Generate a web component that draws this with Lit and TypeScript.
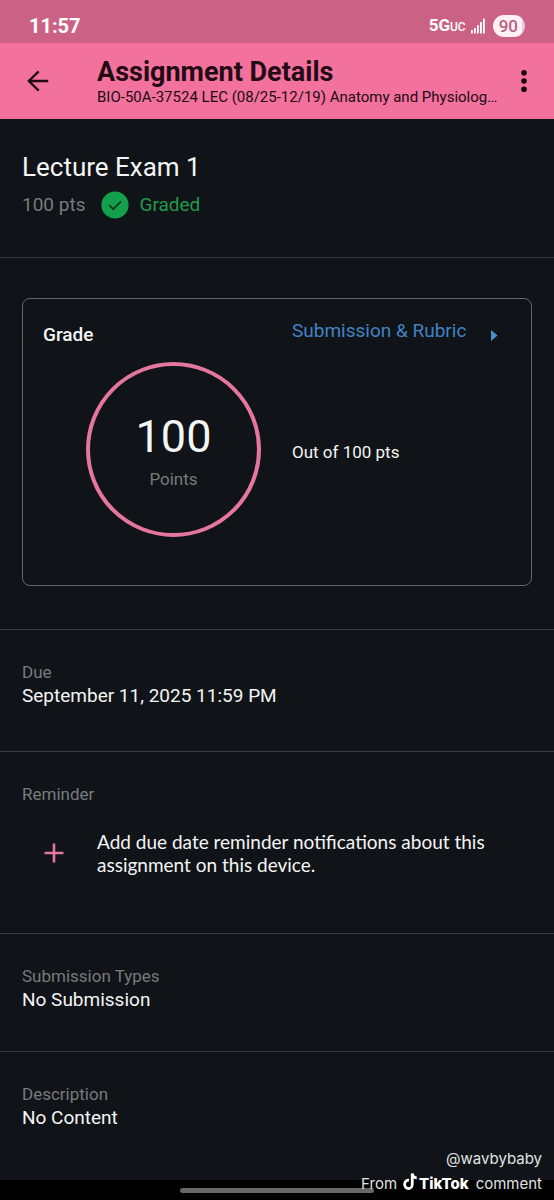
import { LitElement, html, css } from "lit";
import { customElement, property } from "lit/decorators.js";

@customElement("status-bar")
class StatusBar extends LitElement {
  static styles = css`
    :host {
      display: flex;
      align-items: center;
      justify-content: space-between;
      height: 43px;
      padding: 9px 29px 0 29px;
      box-sizing: border-box;
      background: #cb6285;
      color: #fff;
    }
    .time {
      font-size: 20px;
      font-weight: 700;
      line-height: 24px;
    }
    .right {
      display: flex;
      align-items: center;
    }
    .net {
      font-size: 17px;
      font-weight: 700;
      line-height: 24px;
    }
    .uc {
      font-size: 12px;
      font-weight: 500;
    }
    .signal {
      margin: 0 7px 0 4px;
    }
    .battery {
      padding: 0 7px 0 6px;
      border-radius: 12px;
      background: linear-gradient(to right, #fff0f6 90%, #eec5d5 90%);
      color: #b9607f;
      font-size: 17px;
      font-weight: 500;
      line-height: 22px;
    }
  `;
  render() {
    return html`
      <span class="time">11:57</span>
      <div class="right">
        <span class="net">5G<span class="uc">UC</span></span>
        <svg class="signal" width="16" height="16" viewBox="0 0 16 16" fill="#fff" aria-hidden="true">
          <rect x="1" y="12" width="1.8" height="3.5" />
          <rect x="4" y="10" width="1.8" height="5.5" />
          <rect x="7" y="7" width="1.8" height="8.5" />
          <rect x="10" y="4" width="1.8" height="11.5" />
          <rect x="13" y="0.5" width="1.8" height="15" />
        </svg>
        <span class="battery">90</span>
      </div>
    `;
  }
}

@customElement("app-header")
class AppHeader extends LitElement {
  static styles = css`
    :host {
      display: flex;
      align-items: center;
      height: 76px;
      box-sizing: border-box;
      padding: 0 12px 0 20px;
      background: #f2729d;
      color: #240a14;
    }
    .icon {
      display: flex;
      justify-content: center;
      flex: none;
      width: 36px;
      padding: 0;
      border: 0;
      background: none;
      color: inherit;
    }
    .titles {
      flex: 1;
      min-width: 0;
      padding-top: 2px;
      margin: 0 8px 0 41px;
    }
    .title {
      margin: 0;
      font-size: 27px;
      font-weight: 700;
      line-height: 30px;
    }
    .course {
      margin: 0;
      overflow: hidden;
      font-size: 15px;
      line-height: 20px;
      text-overflow: ellipsis;
      white-space: nowrap;
    }
  `;
  render() {
    return html`
      <button class="icon" aria-label="Back">
        <svg width="22" height="22" viewBox="0 0 22 22" fill="none" stroke="currentColor" stroke-width="2.4">
          <path d="M21.2 11H2M11.7 1.4L1.9 11l9.8 9.6" />
        </svg>
      </button>
      <div class="titles">
        <h1 class="title">Assignment Details</h1>
        <p class="course">BIO-50A-37524 LEC (08/25-12/19) Anatomy and Physiolog…</p>
      </div>
      <button class="icon" aria-label="More options">
        <svg width="8" height="24" viewBox="0 0 8 24" fill="#16060c">
          <circle cx="4" cy="3.8" r="2.8" />
          <circle cx="4" cy="12" r="2.8" />
          <circle cx="4" cy="20.2" r="2.8" />
        </svg>
      </button>
    `;
  }
}

@customElement("grade-card")
class GradeCard extends LitElement {
  @property() score = "100";
  static styles = css`
    :host {
      display: grid;
      grid-template-columns: 1fr 1fr;
      column-gap: 14px;
      padding: 20px;
      padding-bottom: 48px;
      border: 1px solid #63666a;
      border-radius: 8px;
      color: #f4f5f5;
    }
    .heading {
      margin: 0;
      padding-top: 4px;
      font-size: 19px;
      font-weight: 500;
      line-height: 24px;
    }
    .link {
      display: flex;
      gap: 25px;
      padding-left: 8px;
      color: #4083c4;
      font-size: 19px;
      line-height: 24px;
      text-decoration: none;
      white-space: nowrap;
    }
    .arrow {
      margin-top: 11px;
    }
    .ring {
      display: flex;
      flex-direction: column;
      align-items: center;
      justify-content: center;
      width: 175px;
      height: 175px;
      margin: 15px 0 0 43px;
      box-sizing: border-box;
      border: 4px solid #e5769d;
      border-radius: 50%;
    }
    .score {
      font-size: 45px;
      line-height: 54px;
    }
    .unit {
      padding-top: 5px;
      color: #777b7e;
      font-size: 17px;
      line-height: 20px;
    }
    .total {
      align-self: center;
      margin: 20px 0 0 8px;
      font-size: 17px;
      line-height: 20px;
    }
  `;
  render() {
    return html`
      <h3 class="heading">Grade</h3>
      <a class="link" href="#submission">
        Submission &amp; Rubric
        <svg class="arrow" width="7" height="12" viewBox="0 0 7 12" fill="#4b8fcb" aria-hidden="true">
          <path d="M0 0L6.5 5.5L0 11z" />
        </svg>
      </a>
      <div class="ring">
        <span class="score">${this.score}</span>
        <span class="unit">Points</span>
      </div>
      <p class="total">Out of 100 pts</p>
    `;
  }
}

@customElement("detail-section")
class DetailSection extends LitElement {
  @property() label = "";
  @property() value = "";
  static styles = css`
    :host {
      display: block;
      padding: 31px 22px 38px;
      border-bottom: 1px solid #3a3d40;
    }
    .label {
      margin: 0;
      color: #777b7e;
      font-size: 17px;
      font-weight: 400;
      line-height: 22px;
    }
    .value {
      margin: 0;
      color: #f4f5f5;
      font-size: 19px;
      line-height: 26px;
    }
  `;
  render() {
    return html`
      <h2 class="label">${this.label}</h2>
      ${this.value ? html`<p class="value">${this.value}</p>` : html`<slot></slot>`}
    `;
  }
}

@customElement("app-root")
class AppRoot extends LitElement {
  static styles = css`
    :host {
      position: relative;
      display: flex;
      flex-direction: column;
      min-height: 100vh;
      background: #101317;
      color: #f4f5f5;
      font-family: Roboto, "Liberation Sans", sans-serif;
    }
    .main {
      flex: 1;
    }
    .summary {
      padding: 32px 22px 38px;
      border-bottom: 1px solid #3a3d40;
    }
    .name {
      margin: 0;
      font-size: 26px;
      font-weight: 400;
      line-height: 32px;
    }
    .status {
      display: flex;
      align-items: center;
      padding-top: 8px;
      color: #777b7e;
      font-size: 19px;
      line-height: 28px;
    }
    .check {
      margin: 0 10px 0 16px;
    }
    .graded {
      color: #219a4b;
    }
    .grade {
      padding: 40px 22px 43px;
      border-bottom: 1px solid #3a3d40;
    }
    .due {
      padding-bottom: 42px;
    }
    .reminder {
      padding-bottom: 57px;
    }
    .add {
      display: flex;
      align-items: center;
      gap: 33px;
      padding: 25px 12px 0 22px;
      border: 0;
      background: none;
      color: inherit;
      font-family: Lato, sans-serif;
      font-size: 19px;
      line-height: 23px;
      text-align: left;
    }
    .plus {
      flex: none;
    }
    .last {
      border-bottom: 0;
    }
    .nav {
      display: flex;
      align-items: center;
      justify-content: center;
      height: 20px;
      background: #000;
    }
    .pill {
      width: 35%;
      height: 5px;
      border-radius: 3px;
      background: #67686a;
    }
    .credit {
      position: absolute;
      right: 12px;
      bottom: 4px;
      color: #e2e3e4;
      font-family: Inter, sans-serif;
      font-size: 15px;
      line-height: 25px;
      text-align: right;
    }
    .source {
      display: flex;
      align-items: center;
      justify-content: flex-end;
    }
    .note {
      margin: 0 2px 4px 6px;
    }
    .brand {
      margin-right: 7px;
      color: #fff;
      font-weight: 800;
    }
  `;
  render() {
    return html`
      <status-bar></status-bar>
      <app-header></app-header>
      <main class="main">
        <section class="summary">
          <h2 class="name">Lecture Exam 1</h2>
          <div class="status">
            <span>100 pts</span>
            <svg class="check" width="28" height="28" viewBox="0 0 28 28" fill="none" aria-hidden="true">
              <circle cx="14" cy="14" r="13.6" fill="#14a04b" />
              <path d="M8.3 14.2l4 4L20 10.4" stroke="#0d3a20" stroke-width="1.7" />
            </svg>
            <span class="graded">Graded</span>
          </div>
        </section>
        <section class="grade"><grade-card></grade-card></section>
        <detail-section class="due" label="Due" value="September 11, 2025 11:59 PM"></detail-section>
        <detail-section class="reminder" label="Reminder">
          <button class="add">
            <svg class="plus" width="20" height="20" viewBox="0 0 20 20" stroke="#e5769d" stroke-width="2.6" aria-hidden="true">
              <path d="M0.5 10h19M10 0.5v19" />
            </svg>
            <span>Add due date reminder notifications about this assignment on this device.</span>
          </button>
        </detail-section>
        <detail-section label="Submission Types" value="No Submission"></detail-section>
        <detail-section class="last" label="Description" value="No Content"></detail-section>
      </main>
      <div class="nav"><div class="pill"></div></div>
      <div class="credit">
        <div>@wavbybaby</div>
        <div class="source">
          <span>From</span>
          <svg class="note" width="14" height="17" viewBox="0 0 13 16" fill="none" stroke="#fff" stroke-width="2.6" aria-hidden="true">
            <path d="M5.6 6.8C3.2 6.6 1.4 8.4 1.4 10.7s1.6 3.9 3.6 3.9 3.6-1.6 3.6-3.8V0.4C8.8 2.9 10.4 4.4 12.8 4.6" />
          </svg>
          <span class="brand">TikTok</span>
          <span>comment</span>
        </div>
      </div>
    `;
  }
}
